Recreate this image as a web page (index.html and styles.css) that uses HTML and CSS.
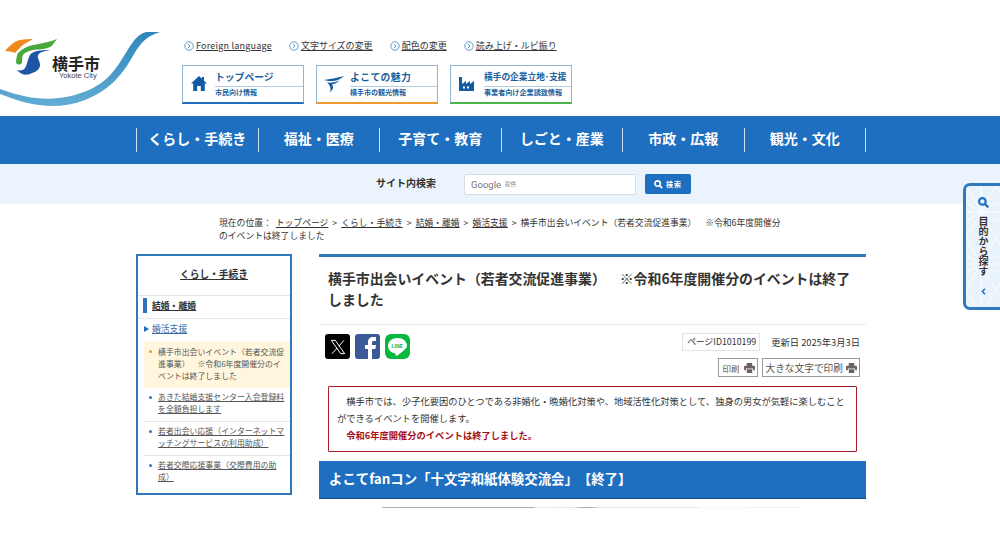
FILE: index.html
```html
<!DOCTYPE html>
<html lang="ja">
<head>
<meta charset="utf-8">
<title>横手市出会いイベント</title>
<link rel="stylesheet" href="styles.css">
</head>
<body>
<header class="site-header">
  <a class="logo">
    <svg class="logo-art" width="160" height="76" viewBox="0 0 160 76">
      <defs><linearGradient id="swoosh" x1="0" y1="0" x2="0" y2="1"><stop offset="0" stop-color="#2f86bd"/><stop offset="1" stop-color="#62acd4"/></linearGradient></defs>
      <path d="M0 57C30 68 60 72 93 56C115 45 122 25 133 10C138 3 143 1 146 0L160 0C146 4 140 12 134 22C120 48 105 60 85 68C55 80 25 72 0 62Z" fill="url(#swoosh)"/>
      <path d="M5 19C10 13 15 9 20 8C25 7 29 7 33 7C28 10 25 11 23 13C20 15 18 18 15 21C13 20 9 19 5 19Z" fill="#f08a1c"/>
      <path d="M16 31C16 27 17 23 18 21C23 16 28 14 33 13C42 11 50 10 57 7C54 11 52 14 50 15C44 18 38 17 33 18C28 19 24 21 23 23C22 26 22 29 22 31C20 33 18 33 16 31Z" fill="#4aa83a"/>
      <path d="M17 38C21 39 24 38 25 36C27 33 27 30 28 28C29 25 30 22 32 21C37 18 44 18 50 18C45 19 40 20 38 23C37 26 40 29 40 33C40 37 36 40 32 41C27 44 21 43 17 38Z" fill="#1f55a5"/>
    </svg>
    <span class="logo-name">横手市</span>
    <span class="logo-sub">Yokote City</span>
  </a>
  <div class="header-right">
    <ul class="util">
      <li><svg class="circ" viewBox="0 0 10 10"><circle cx="5" cy="5" r="4.2"/><path d="M4 3l2 2-2 2"/></svg><a class="latin">Foreign language</a></li>
      <li><svg class="circ" viewBox="0 0 10 10"><circle cx="5" cy="5" r="4.2"/><path d="M4 3l2 2-2 2"/></svg><a>文字サイズの変更</a></li>
      <li><svg class="circ" viewBox="0 0 10 10"><circle cx="5" cy="5" r="4.2"/><path d="M4 3l2 2-2 2"/></svg><a>配色の変更</a></li>
      <li><svg class="circ" viewBox="0 0 10 10"><circle cx="5" cy="5" r="4.2"/><path d="M4 3l2 2-2 2"/></svg><a>読み上げ・ルビ振り</a></li>
    </ul>
    <div class="portals">
      <a class="portal portal-blue">
        <svg class="portal-icon" width="16" height="16" viewBox="0 0 16 16"><path d="M8 0L0 7.500h2.200V15h4V10h3.600v5h4V7.500H16L13 4.700V1h-2v1.800Z" fill="#0f5ca3"/></svg>
        <span class="portal-text"><b class="portal-main">トップページ</b><small class="portal-sub">市民向け情報</small></span>
      </a>
      <a class="portal portal-orange">
        <svg class="portal-icon" width="20" height="16" viewBox="0 0 20 16"><path d="M0 4C6 3 13 2 20 0C17 3 12 5 8 5C6 5 3 5 0 4ZM3 6.500C8 7 12 6 16 4.500C13 7 10 8 8 8.500C10 11 9 14 6 16C7 13 7 10 3 6.500Z" fill="#0f5ca3"/></svg>
        <span class="portal-text"><b class="portal-main portal-mid">よこての魅力</b><small class="portal-sub">横手市の観光情報</small></span>
      </a>
      <a class="portal portal-green">
        <svg class="portal-icon" width="16" height="16" viewBox="0 0 16 16"><path d="M0 15V1h3v7l4-3v3l4-3v3l4-3v10Z" fill="#0f5ca3"/><path d="M4 10.500h2v2H4zM8 10.500h2v2H8z" fill="#fff"/></svg>
        <span class="portal-text"><b class="portal-main portal-tight">横手の企業立地･支援</b><small class="portal-sub portal-tight2">事業者向け企業誘致情報</small></span>
      </a>
    </div>
  </div>
</header>

<nav class="gnav">
  <ul class="gnav-list">
    <li>くらし・手続き</li>
    <li>福祉・医療</li>
    <li>子育て・教育</li>
    <li>しごと・産業</li>
    <li>市政・広報</li>
    <li>観光・文化</li>
  </ul>
</nav>

<div class="searchbar">
  <span class="search-label">サイト内検索</span>
  <div class="search-input"><span class="g">Google</span><span class="g-sub">提供</span></div>
  <button class="search-btn"><svg width="9" height="9" viewBox="0 0 10 10"><circle cx="4" cy="4" r="3" fill="none" stroke="#fff" stroke-width="1.800"/><path d="M6 6l3.200 3.200" stroke="#fff" stroke-width="1.800"/></svg><span>検索</span></button>
</div>

<div class="crumbs">現在の位置： <a>トップページ</a> &gt; <a>くらし・手続き</a> &gt; <a>結婚・離婚</a> &gt; <a>婚活支援</a> &gt; 横手市出会いイベント（若者交流促進事業）　※令和6年度開催分のイベントは終了しました</div>

<div class="wrap">
  <aside class="side">
    <h2 class="side-title"><a>くらし・手続き</a></h2>
    <h3 class="side-cat"><a>結婚・離婚</a></h3>
    <p class="side-sub"><a>婚活支援</a></p>
    <ul class="side-list">
      <li class="current">横手市出会いイベント（若者交流促進事業）　※令和6年度開催分のイベントは終了しました</li>
      <li><a>あきた結婚支援センター入会登録料を全額負担します</a></li>
      <li><a>若者出会い応援（インターネットマッチングサービスの利用助成）</a></li>
      <li><a>若者交際応援事業（交際費用の助成）</a></li>
    </ul>
  </aside>
  <main class="main">
    <h1 class="title">横手市出会いイベント（若者交流促進事業）　※令和6年度開催分のイベントは終了しました</h1>
    <div class="meta">
      <div class="share">
        <span class="sns sns-x"><svg width="16" height="16" viewBox="0 0 24 24"><path d="M2 2h6l14 20h-6Z" fill="none" stroke="#fff" stroke-width="1.500"/><path d="M21 2l-8 9M11 13.500L3 22" stroke="#fff" stroke-width="1.500"/></svg></span>
        <span class="sns sns-f"><svg width="25" height="25" viewBox="0 0 25 25"><path d="M13 25V15h-3v-4h3V8c0-3 2-5 5-5h3v4h-2c-1.500 0-2 .5-2 2v2h4l-.6 4H17v10Z" fill="#fff"/></svg></span>
        <span class="sns sns-l"><svg width="25" height="25" viewBox="0 0 25 25"><path d="M12.500 4C7 4 3 7.500 3 11.800c0 3.800 3 7 7.200 7.600.6.100.5 2.600 1 2.600 .6 0 4.500-2.600 7.500-5.500 2-1.700 3.300-3 3.300-4.700C22 7.500 18 4 12.500 4Z" fill="#fff"/></svg><b class="line-text">LINE</b></span>
      </div>
      <div class="meta-right">
        <div class="meta-row"><span class="pageid">ページID1010199</span><span class="updated">更新日 2025年3月3日</span></div>
        <div class="meta-row meta-print">
          <span class="print print-s">印刷<svg class="pr" viewBox="0 0 12 11"><path d="M3 0h6v3H3zM1 3h10a1 1 0 0 1 1 1v4H10V6H2v2H0V4a1 1 0 0 1 1-1ZM3 7h6v4H3z" fill="#6b6264"/></svg></span>
          <span class="print print-l">大きな文字で印刷<svg class="pr" viewBox="0 0 12 11"><path d="M3 0h6v3H3zM1 3h10a1 1 0 0 1 1 1v4H10V6H2v2H0V4a1 1 0 0 1 1-1ZM3 7h6v4H3z" fill="#6b6264"/></svg></span>
        </div>
      </div>
    </div>
    <div class="notice">
      <p class="notice-text">　横手市では、少子化要因のひとつである非婚化・晩婚化対策や、地域活性化対策として、独身の男女が気軽に楽しむことができるイベントを開催します。</p>
      <p class="notice-red">　令和6年度開催分のイベントは終了しました。</p>
    </div>
    <h2 class="section">よこてfanコン「十文字和紙体験交流会」【終了】</h2>
    <div class="photo-edge"></div>
  </main>
</div>

<aside class="purpose">
  <svg class="pattern" width="100%" height="100%"><defs><pattern id="asa" width="30" height="52" patternUnits="userSpaceOnUse"><path d="M0 0L30 52M30 0L0 52M15 0V52M0 26H30M0 17L30 35M0 35L30 17" stroke="#fff" stroke-width=".8" fill="none"/></pattern></defs><rect width="100%" height="100%" fill="url(#asa)"/></svg>
  <svg class="purpose-search" width="11" height="11" viewBox="0 0 10 10"><circle cx="4" cy="4" r="3" fill="none" stroke="#1f6fbd" stroke-width="2"/><path d="M6 6l3.400 3.400" stroke="#1f6fbd" stroke-width="2"/></svg>
  <span class="purpose-text">目的から探す</span>
  <svg class="purpose-arrow" width="5" height="7" viewBox="0 0 5 7"><path d="M4 .8L1.300 3.500 4 6.200" fill="none" stroke="#1f6fbd" stroke-width="1.500"/></svg>
</aside>
</body>
</html>
```
FILE: styles.css
```css
* { box-sizing: border-box; }
html, body { margin: 0; padding: 0; height: 540px; overflow: hidden; background: #fff; }
body { font-family: "Noto Sans CJK JP", "Noto Sans", sans-serif; color: #333; font-size: 10px; text-spacing-trim: space-all; }
ul { list-style: none; margin: 0; padding: 0; }
h1, h2, h3, p { margin: 0; }
a { color: inherit; text-decoration: underline; }

.site-header { height: 116px; position: relative; padding: 39px 0 0 182px; }
.logo { position: absolute; left: 0; top: 32px; width: 160px; height: 76px; text-decoration: none; }
.logo-art { position: absolute; left: 0; top: 0; }
.logo-name { position: absolute; left: 52px; top: 19px; font-size: 16px; line-height: 24px; font-weight: 700; color: #222; }
.logo-sub { position: absolute; left: 59px; top: 39px; font-family: "Liberation Sans", sans-serif; font-size: 7.500px; line-height: 9px; color: #444; }

.util { display: flex; height: 13px; align-items: center; margin-left: 2px; }
.util li { display: flex; align-items: center; gap: 2px; font-size: 9px; line-height: 13px; margin-right: 17px; color: #333; }
.latin { letter-spacing: .22px; }
.circ { width: 10px; height: 10px; fill: none; stroke: #3a86c4; stroke-width: .8; }
.portals { display: flex; gap: 12px; margin-top: 13px; }
.portal { width: 122px; height: 39px; border: 1px solid #8fb4d4; border-bottom-width: 2px; display: flex; align-items: center; padding-left: 8px; text-decoration: none; color: #1a5f9e; }
.portal-blue { border-bottom-color: #1f6fbd; }
.portal-orange { border-bottom-color: #ef9a2c; padding-left: 7px; }
.portal-green { border-bottom-color: #4db34d; }
.portal-icon { flex: none; }
.portal-text { display: block; margin-left: 8px; flex: 1; align-self: flex-start; }
.portal-orange .portal-text { margin-left: 6px; }
.portal-green .portal-text { margin-left: 9px; }
.portal-main { display: block; font-size: 9.800px; font-weight: 700; line-height: 22px; height: 21px; border-bottom: 1px solid #b5cde2; white-space: nowrap; }
.portal-sub { display: block; font-size: 7px; line-height: 11px; font-weight: 700; white-space: nowrap; }
.portal-mid { letter-spacing: .4px; }
.portal-tight { font-size: 8.700px; }
.portal-tight2 { font-size: 7.100px; }

.gnav { height: 48px; background: #1f6fc0; padding: 12px 0 0 136px; }
.gnav-list { display: flex; width: 730px; height: 24px; border-left: 1px solid #cfe2f3; }
.gnav-list li { flex: 1; border-right: 1px solid #cfe2f3; color: #fff; font-size: 14px; font-weight: 700; line-height: 20px; text-align: center; white-space: nowrap; }

.searchbar { height: 40px; background: #ebf4fc; display: flex; align-items: center; padding-left: 376px; }
.search-label { font-size: 10px; font-weight: 700; width: 88px; line-height: 18px; margin-bottom: 2px; color: #333; }
.search-input { width: 172px; height: 21px; background: #fff; border: 1px solid #d5dde4; border-radius: 2px; display: flex; align-items: center; padding-left: 6px; gap: 4px; }
.g { font-family: "Roboto", sans-serif; font-size: 9.500px; color: #777; }
.g-sub { font-size: 5.500px; color: #888; }
.search-btn { margin-left: 9px; width: 46px; height: 20px; background: #1f6fc0; border: 0; border-radius: 2px; color: #fff; font: 700 7px "Noto Sans CJK JP", sans-serif; letter-spacing: 1px; display: flex; align-items: center; justify-content: center; gap: 3px; padding: 0; }

.crumbs { width: 570px; margin: 12px 0 0 219px; font-size: 8.800px; line-height: 13px; word-spacing: 2px; color: #333; height: 26px; }

.wrap { width: 730px; margin: 12px 0 0 136px; display: flex; align-items: flex-start; justify-content: space-between; }
.side { width: 156px; height: 241px; border: 2px solid #2f79bf; }
.side-title { height: 40px; font-size: 9.700px; line-height: 36px; text-align: center; font-weight: 700; border-bottom: 1px solid #e6e6e6; }
.side-cat { height: 23px; margin: 0; padding: 2px 0 0 5px; font-size: 8.800px; line-height: 15px; font-weight: 700; border-bottom: 1px solid #e6e6e6; }
.side-cat a { display: block; border-left: 4px solid #2f72b8; padding-left: 5px; }
.side-sub { height: 22px; padding-left: 6px; font-size: 8.800px; line-height: 20px; color: #3a6ea5; }
.side-sub::before { content: ""; display: inline-block; border-left: 5px solid #1f6fc0; border-top: 3px solid transparent; border-bottom: 3px solid transparent; margin-right: 3px; }
.side-list li { margin-left: 6px; padding: 3px 3px 6px 14px; font-size: 7.900px; line-height: 12px; color: #555; position: relative; border-bottom: 1px solid #e6e6e6; }
.side-list li:last-child { border-bottom: 0; }
.side-list li::before { content: ""; position: absolute; left: 5px; top: 8px; width: 3px; height: 3px; border-radius: 50%; background: #2f72b8; }
.side-list li.current { background: #fff6dd; border-bottom: 0; padding: 5px 3px 6px 14px; }
.side-list li.current::before { background: #ef9a2c; top: 9px; }

.main { width: 547px; border-top: 3px solid #2f79bf; }
.title { padding: 11px 10px 13px 9px; font-size: 13.900px; line-height: 21px; font-weight: 700; color: #333; border-bottom: 1px solid #e9e9e9; height: 68px; }
.meta { height: 61px; padding: 8px 6px 0 6px; display: flex; justify-content: space-between; }
.share { display: flex; gap: 5px; margin-top: 1px; align-self: flex-start; }
.sns { width: 25px; height: 25px; border-radius: 3px; display: flex; align-items: center; justify-content: center; position: relative; }
.sns-x { background: #000; }
.sns-f { background: #3b5998; overflow: hidden; }
.sns-l { background: #06b83e; border-radius: 6px; }
.line-text { position: absolute; font: 700 5px "Liberation Sans", sans-serif; color: #06b83e; top: 9px; left: 6.500px; }
.meta-right { display: flex; flex-direction: column; align-items: flex-end; }
.meta-row { display: flex; align-items: center; }
.pageid { border: 1px solid #e4e4e4; padding: 0 3px 0 4px; font-size: 8.800px; line-height: 16px; }
.updated { font-size: 9.300px; margin-left: 11px; }
.meta-print { margin-top: 7px; gap: 4px; }
.print { border: 1px solid #999; display: flex; align-items: center; height: 19px; padding: 0 2px 0 3px; color: #555; }
.print-s { font-size: 8.500px; gap: 4px; }
.print-l { font-size: 9.700px; gap: 3px; }
.pr { width: 11px; height: 10px; }

.notice { margin: 0 9px; height: 66px; border: 1px solid #a51f24; border-radius: 1px; padding: 6px 8px 4px; }
.notice-text { font-size: 9.280px; line-height: 17px; }
.notice-red { font-size: 9.280px; line-height: 17px; font-weight: 700; color: #a50f14; }

.section { margin-top: 9px; height: 38px; background: #1f6fc0; border-bottom: 1px solid #124a85; color: #fff; font-size: 13.400px; line-height: 34px; font-weight: 700; padding-left: 10px; }
.photo-edge { margin: 8px 0 0 63px; width: 418px; height: 1px; background: linear-gradient(90deg, #b8aca0 0, #aaa 12%, #aaa 36%, #eee 37%, #e8e2da 46%, #aaa 48%, #aaa 50%, #e4e4e4 52%, #e4e4e4 75%, #fafafa 76%, #f2f0ec 100%); }

.purpose { position: fixed; right: 0; top: 183px; width: 37px; height: 127px; background: #e9f3fb; border: 3px solid #2f79bf; border-right: 0; border-radius: 7px 0 0 7px; overflow: hidden; display: flex; flex-direction: column; align-items: center; padding-top: 11px; }
.pattern { position: absolute; left: 0; top: 0; }
.purpose-search { position: relative; }
.purpose-text { position: relative; writing-mode: vertical-rl; font-size: 10px; font-weight: 700; line-height: 14px; margin-top: 8px; color: #333; letter-spacing: .1px; }
.purpose-arrow { position: relative; margin-top: 11px; }
```
